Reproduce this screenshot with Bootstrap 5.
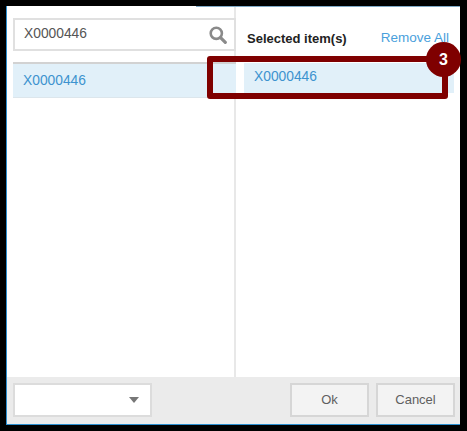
<!DOCTYPE html>
<html lang="en">
<head>
    <meta charset="UTF-8">
    <title>Select items</title>
    <link href="https://cdn.jsdelivr.net/npm/bootstrap@5.3.0/dist/css/bootstrap.min.css" rel="stylesheet">
    <style>
        html, body { height: 431px; overflow: hidden; }
        body { background: #000; font-family: "Liberation Sans", Arial, sans-serif; color: #555; padding: 6px 7px 6px 6px; }
        .picker-dialog { position: relative; width: 454px; height: 419px; background: #fff; border-left: 1px solid #2b8fd0; border-bottom: 1px solid #2b8fd0; }
        .picker-topline { position: absolute; top: 0; left: 189px; right: 0; height: 1px; background: #7fa9c6; }
        .picker-body { height: 371px; }
        .pane-left { width: 229px; border-right: 2px solid #e8e8e8; padding: 12px 0 0 6px; }
        .pane-right { flex: 1; padding: 0 6px 0 8px; }
        .search-box { height: 33px; margin-right: -2px; border: 2px solid #e0e0e0; padding: 0 7px 0 9px; font-size: 13.8px; color: #555; }
        .result-row { margin: 11px -2px 0 0; height: 36px; background: #e1f0f9; border-top: 2px solid #d2d2d2; border-bottom: 1px solid #dce6ec; padding: 1px 0 0 10px; font-size: 13.8px; color: #3d93cf; }
        .selected-head { height: 57px; padding: 14px 5px 6px 3px; }
        .selected-title { font-size: 13px; font-weight: 700; color: #222; }
        .remove-link { font-size: 13.5px; color: #4a9fdc; text-decoration: none; }
        .selected-row { height: 30px; background: #e1f0f9; padding: 0 0 2px 10px; font-size: 13.8px; color: #3d93cf; }
        .picker-foot { height: 47px; background: #ebebeb; padding: 6px 5px 6px 6px; }
        .fake-select { width: 139px; height: 34px; background: #fff; border: 2px solid #dcdcdc; padding-right: 11px; }
        .fake-caret { width: 0; height: 0; border-left: 5.5px solid transparent; border-right: 5.5px solid transparent; border-top: 6px solid #777; }
        .foot-gap { gap: 7px; }
        .foot-btn { width: 79px; height: 34px; padding: 0; background: #f3f3f3; border: 2px solid #d6d6d6; border-radius: 0; font-size: 13px; color: #5f5f5f; }
        .callout-box { position: absolute; left: 200px; top: 50px; width: 241px; height: 43px; border: 6px solid #7f0000; border-radius: 3px; }
        .callout-num { position: absolute; left: 419px; top: 36px; width: 35px; height: 35px; border-radius: 50%; background: #7f0000; color: #fff; font-size: 16px; font-weight: 700; }
    </style>
</head>
<body>
    <div class="picker-dialog d-flex flex-column">
        <div class="picker-topline"></div>
        <div class="picker-body d-flex">
            <div class="pane-left">
                <div class="search-box d-flex align-items-center justify-content-between">
                    <span>X0000446</span>
                    <svg width="18" height="18" viewBox="0 0 18 18" fill="none" stroke="#8a8a8a">
                        <circle cx="7.3" cy="7.3" r="5.6" stroke-width="2.6"/>
                        <path d="M11.8 11.8L16.3 16.3" stroke-width="3.2" stroke-linecap="round"/>
                    </svg>
                </div>
                <div class="result-row d-flex align-items-center">X0000446</div>
            </div>
            <div class="pane-right">
                <div class="selected-head d-flex justify-content-between align-items-center">
                    <span class="selected-title">Selected item(s)</span>
                    <a class="remove-link" href="#">Remove All</a>
                </div>
                <div class="selected-row d-flex align-items-center">X0000446</div>
            </div>
        </div>
        <div class="picker-foot d-flex justify-content-between">
            <div class="fake-select d-flex align-items-center justify-content-end"><span class="fake-caret"></span></div>
            <div class="d-flex foot-gap">
                <button class="btn foot-btn" type="button">Ok</button>
                <button class="btn foot-btn" type="button">Cancel</button>
            </div>
        </div>
        <div class="callout-box"></div>
        <div class="callout-num d-flex align-items-center justify-content-center">3</div>
    </div>
    <script src="https://cdn.jsdelivr.net/npm/bootstrap@5.3.0/dist/js/bootstrap.bundle.min.js"></script>
</body>
</html>
